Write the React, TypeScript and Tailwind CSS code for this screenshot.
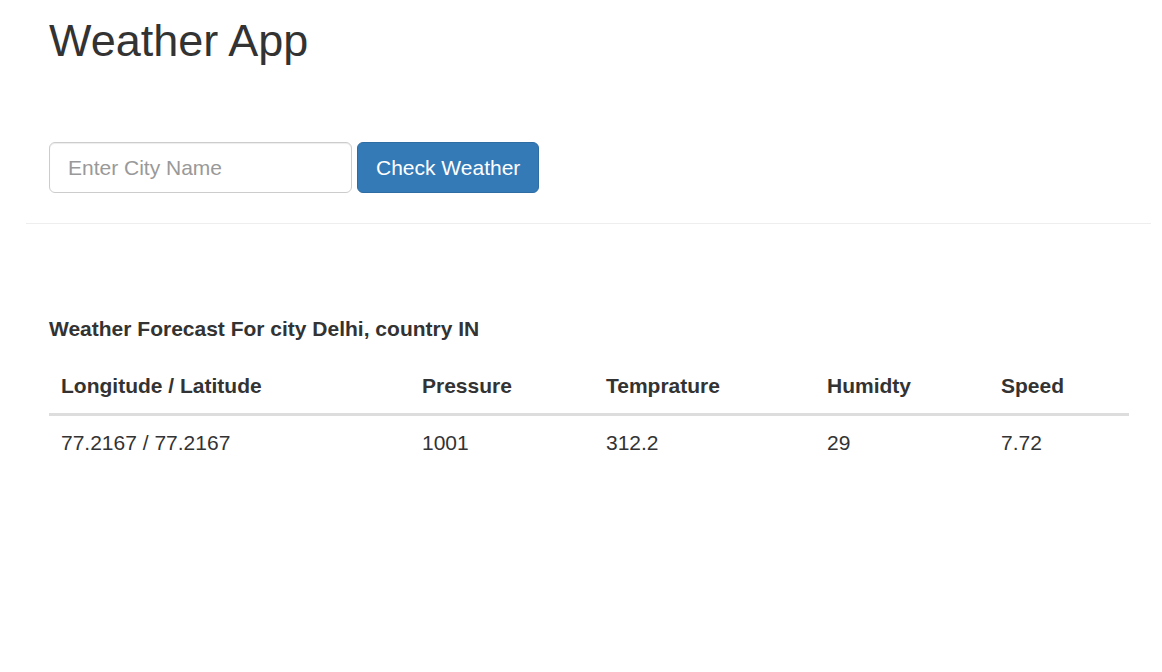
const COLUMNS = [
  { label: "Longitude / Latitude", width: "w-[361px]" },
  { label: "Pressure", width: "w-[184px]" },
  { label: "Temprature", width: "w-[221px]" },
  { label: "Humidty", width: "w-[174px]" },
  { label: "Speed", width: "w-[140px]" },
];

const ROW = ["77.2167 / 77.2167", "1001", "312.2", "29", "7.72"];

export default function App() {
  return (
    <div className="min-h-[672px] bg-white pl-[26px] pr-[11px] text-[21px] leading-[30px] text-[#333] font-['Liberation_Sans',Arial,sans-serif]">
      <div className="pl-[23px]">
        <h2 className="pt-[16px] text-[45px] leading-[49.5px] font-normal">Weather App</h2>

        <form className="mt-[76.5px] flex items-center gap-[5px]" onSubmit={(e) => e.preventDefault()}>
          <input
            type="text"
            placeholder="Enter City Name"
            className="h-[51px] w-[303px] rounded-[6px] border border-[#ccc] bg-white px-[18px] text-[21px] text-[#555] shadow-[inset_0_1px_1px_rgba(0,0,0,0.075)] outline-none placeholder:text-[#999]"
          />
          <button
            type="submit"
            className="h-[51px] rounded-[6px] border border-[#2e6da4] bg-[#337ab7] px-[18px] text-[21px] text-white"
          >
            Check Weather
          </button>
        </form>
      </div>

      <hr className="mt-[30px] border-0 border-t border-[#eee]" />

      <div className="pl-[23px]">
        <div className="mt-[90px] mb-[15px] font-bold">Weather Forecast For city Delhi, country IN</div>

        <table className="w-[1080px] border-collapse text-left">
          <thead>
            <tr>
              {COLUMNS.map((c) => (
                <th key={c.label} className={`${c.width} border-b-[3px] border-[#ddd] p-[12px] font-bold`}>
                  {c.label}
                </th>
              ))}
            </tr>
          </thead>
          <tbody>
            <tr>
              {ROW.map((v, i) => (
                <td key={i} className="p-[12px]">
                  {v}
                </td>
              ))}
            </tr>
          </tbody>
        </table>
      </div>
    </div>
  );
}
